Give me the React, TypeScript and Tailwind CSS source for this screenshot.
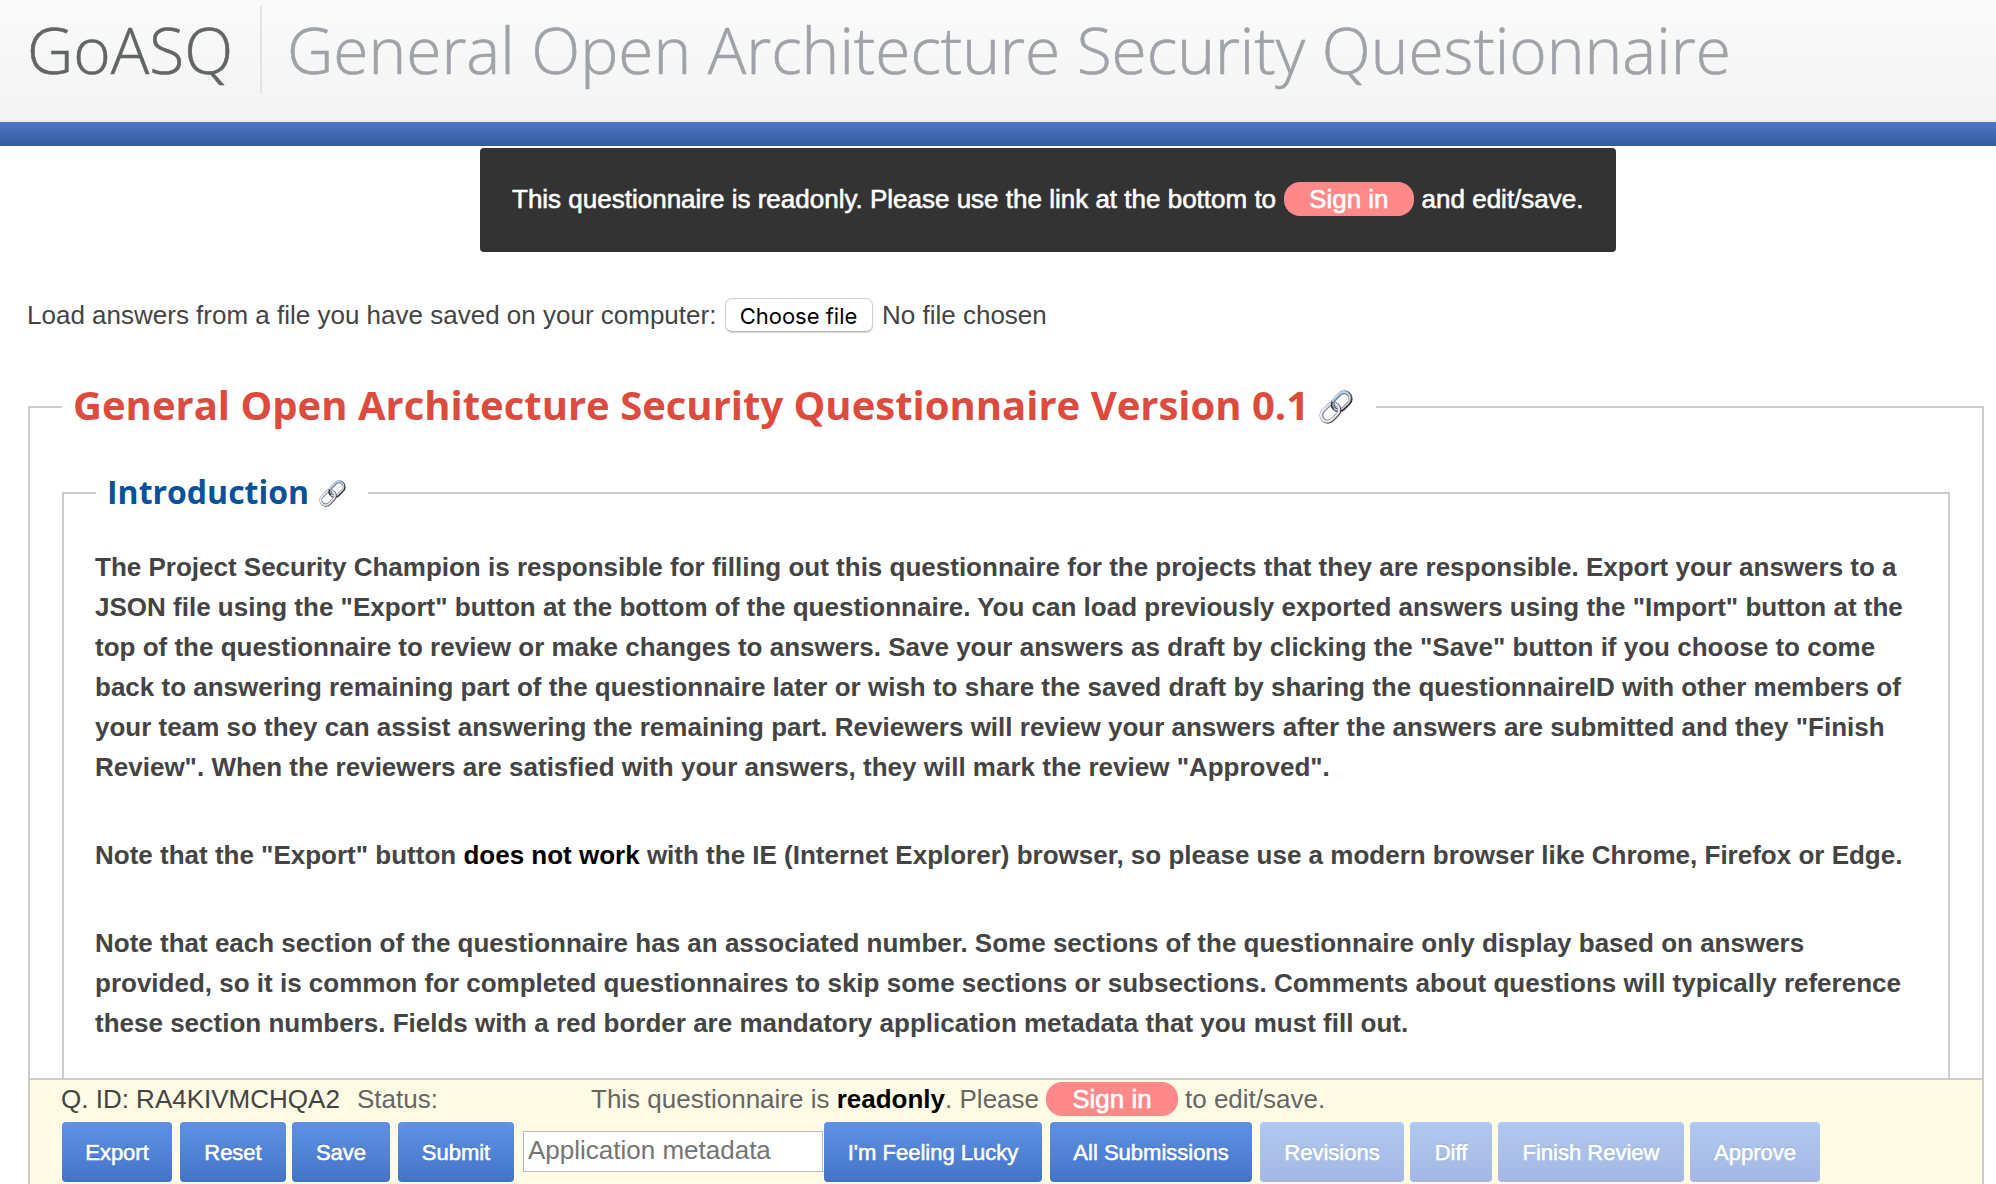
import { useId, type ReactNode } from "react";

function LinkIcon({ className }: { className: string }) {
  const id = useId();
  const upper = `${id}-upper`;
  const lower = `${id}-lower`;
  return (
    <svg viewBox="0 0 34 34" fill="none" className={className} aria-hidden="true">
      <defs>
        <linearGradient id={upper} x1="0" y1="0" x2="0" y2="1">
          <stop offset="0" stopColor="#7f94ad" />
          <stop offset="0.5" stopColor="#5b5a60" />
          <stop offset="1" stopColor="#3c302f" />
        </linearGradient>
        <linearGradient id={lower} x1="0" y1="0" x2="0" y2="1">
          <stop offset="0" stopColor="#8b9099" />
          <stop offset="0.6" stopColor="#77747a" />
          <stop offset="1" stopColor="#4a4143" />
        </linearGradient>
      </defs>
      <g transform="rotate(-45 22.6 11.4)">
        <rect x="12.4" y="5" width="20.4" height="12.8" rx="6.4" stroke={`url(#${upper})`} strokeWidth="3.9" />
        <rect x="12.2" y="4.3" width="20.4" height="12.8" rx="6.4" stroke="#c9dcf1" strokeWidth="1.7" />
      </g>
      <g transform="rotate(-45 11.4 22.6)">
        <rect x="1.2" y="16.2" width="20.4" height="12.8" rx="6.4" stroke={`url(#${lower})`} strokeWidth="3.9" />
        <rect x="1" y="15.8" width="20.4" height="12.8" rx="6.4" stroke="#e3eaf3" strokeWidth="2.3" />
      </g>
      <path d="M14 12.2c-.9 2.4-.5 4.400 1.300 6" stroke="#3c3436" strokeWidth="3.600" />
      <path d="M14.400 12.400c-.8 2.200-.4 3.900 1.100 5.300" stroke="#a9bdd4" strokeWidth="1.300" />
    </svg>
  );
}

function SignIn({ className }: { className: string }) {
  return (
    <a className={`flex h-[34px] items-center rounded-[16px] bg-[#ff8888] text-white [-webkit-text-stroke:0.6px_white] ${className}`}>
      Sign in
    </a>
  );
}

function ActionButton({ className, disabled, children }: { className: string; disabled?: boolean; children: ReactNode }) {
  const tone = disabled
    ? "from-[#b0c9f0] to-[#a4b7e3] [text-shadow:0_-1px_1px_rgba(60,90,160,0.3)]"
    : "from-[#5f91e5] to-[#4474c8] [text-shadow:0_-1px_1px_rgba(20,50,120,0.3)]";
  return (
    <button
      disabled={disabled}
      className={`h-[60px] shrink-0 rounded-[4px] bg-linear-to-b pt-px text-center text-[22px] whitespace-nowrap text-white [-webkit-text-stroke:0.6px_white] ${tone} ${className}`}
    >
      {children}
    </button>
  );
}

export default function App() {
  return (
    <div className="relative h-[1184px] w-[1996px] overflow-hidden bg-white font-['Liberation_Sans',Arial,sans-serif] text-[26px] leading-[40px] text-[#444]">
      <header className="flex h-[122px] items-start border-b-2 border-[#ececec] bg-linear-to-b from-[#fafafa] to-[#f4f4f4] font-['Open_Sans',sans-serif] text-[64px] leading-[100px] font-light whitespace-nowrap">
        <div className="w-[260px] pl-[27px] text-[#626567] [-webkit-text-stroke:0.6px_#626567]">GoASQ</div>
        <div className="mt-[6px] h-[88px] w-[2px] bg-[#e4e4e4]" />
        <h1 className="pl-[25px] text-[#9fa3a8] [-webkit-text-stroke:0.6px_#9fa3a8]">General Open Architecture Security Questionnaire</h1>
      </header>
      <div className="h-[24px] bg-linear-to-b from-[#4e79c3] to-[#345ba2]" />

      <div className="mt-[2px] ml-[480px] flex h-[104px] w-[1136px] items-start rounded-[4px] bg-[#333] px-8 pt-[34px] leading-[34px] whitespace-nowrap text-white [-webkit-text-stroke:0.6px_white]">
        <span className="mr-2">This questionnaire is readonly. Please use the link at the bottom to</span>
        <SignIn className="mr-2 px-[25px]" />
        <span>and edit/save.</span>
      </div>

      <div className="mt-[43px] flex h-[40px] items-center whitespace-nowrap">
        <span className="w-[725px] pl-[27px]">Load answers from a file you have saved on your computer:</span>
        <button className="mr-[9px] h-[34px] w-[148px] rounded-[7px] border border-[#cfcfcf] border-b-[#b5b5b5] bg-white pt-[2px] pr-px font-['Inter',sans-serif] text-[22px] leading-[30px] text-black shadow-[0_1px_1px_rgba(0,0,0,0.15)]">
          Choose file
        </button>
        <span>No file chosen</span>
      </div>

      <fieldset className="mt-[45px] ml-[28px] h-[900px] w-[1956px] border-2 border-[#ccc] px-8">
        <legend className="flex h-[54px] w-[1314px] items-center pl-[11px] font-['Open_Sans',sans-serif] text-[40px] font-bold whitespace-nowrap text-[#dd4b3e]">
          <span className="-mt-[5px] w-[1246px]">General Open Architecture Security Questionnaire Version 0.1</span>
          <LinkIcon className="size-[34px]" />
        </legend>
        <fieldset className="mt-[36px] h-[800px] border-2 border-[#ccc] px-8">
          <legend className="flex h-[46px] w-[272px] items-center pl-[11px] font-['Open_Sans',sans-serif] text-[32px] font-bold text-[#085299]">
            <span className="-mt-[3px] w-[212px]">Introduction</span>
            <LinkIcon className="size-[27px]" />
          </legend>
          <div className="flex flex-col gap-[48px] pt-[31px] font-bold whitespace-nowrap">
            <p className="-ml-px">
              The Project Security Champion is responsible for filling out this questionnaire for the projects that they are responsible. Export your answers to a<br />
              JSON file using the "Export" button at the bottom of the questionnaire. You can load previously exported answers using the "Import" button at the<br />
              top of the questionnaire to review or make changes to answers. Save your answers as draft by clicking the "Save" button if you choose to come<br />
              back to answering remaining part of the questionnaire later or wish to share the saved draft by sharing the questionnaireID with other members of<br />
              your team so they can assist answering the remaining part. Reviewers will review your answers after the answers are submitted and they "Finish<br />
              Review". When the reviewers are satisfied with your answers, they will mark the review "Approved".
            </p>
            <p className="-ml-px">
              Note that the "Export" button <b className="text-black">does not work</b> with the IE (Internet Explorer) browser, so please use a modern browser like Chrome, Firefox or Edge.
            </p>
            <p className="-ml-px">
              Note that each section of the questionnaire has an associated number. Some sections of the questionnaire only display based on answers<br />
              provided, so it is common for completed questionnaires to skip some sections or subsections. Comments about questions will typically reference<br />
              these section numbers. Fields with a red border are mandatory application metadata that you must fill out.
            </p>
          </div>
        </fieldset>
      </fieldset>

      <footer className="absolute bottom-0 left-[30px] h-[106px] w-[1952px] border-t-2 border-[#ccc] bg-[#fffbe5] pl-[32px] whitespace-nowrap">
        <div className="mt-[2px] flex h-[34px] items-center text-[#666]">
          <span className="-ml-px w-[296px] text-[#444]">Q. ID: RA4KIVMCHQA2</span>
          <span className="w-[234px]">Status:</span>
          <span className="w-[455px]">
            This questionnaire is <b className="text-black">readonly</b>. Please
          </span>
          <SignIn className="mr-[7px] w-[132px] justify-center" />
          <span>to edit/save.</span>
        </div>
        <div className="mt-[6px] flex h-[60px] items-center">
          <ActionButton className="mr-[8px] w-[110px]">Export</ActionButton>
          <ActionButton className="mr-[6px] w-[106px]">Reset</ActionButton>
          <ActionButton className="mr-[8px] w-[98px]">Save</ActionButton>
          <ActionButton className="mr-[9px] w-[116px]">Submit</ActionButton>
          <input
            placeholder="Application metadata"
            className="mr-px -mt-px h-[41px] w-[300px] shrink-0 border border-[#b9b9c0] bg-white pb-[2px] pl-[4px] text-[26px] leading-[36px] placeholder:text-[#757575]"
          />
          <ActionButton className="mr-[8px] w-[218px]">I'm Feeling Lucky</ActionButton>
          <ActionButton className="mr-[8px] w-[202px]">All Submissions</ActionButton>
          <ActionButton disabled className="mr-[6px] w-[144px]">Revisions</ActionButton>
          <ActionButton disabled className="mr-[6px] w-[82px]">Diff</ActionButton>
          <ActionButton disabled className="mr-[6px] w-[186px]">Finish Review</ActionButton>
          <ActionButton disabled className="w-[130px]">Approve</ActionButton>
        </div>
      </footer>
    </div>
  );
}
